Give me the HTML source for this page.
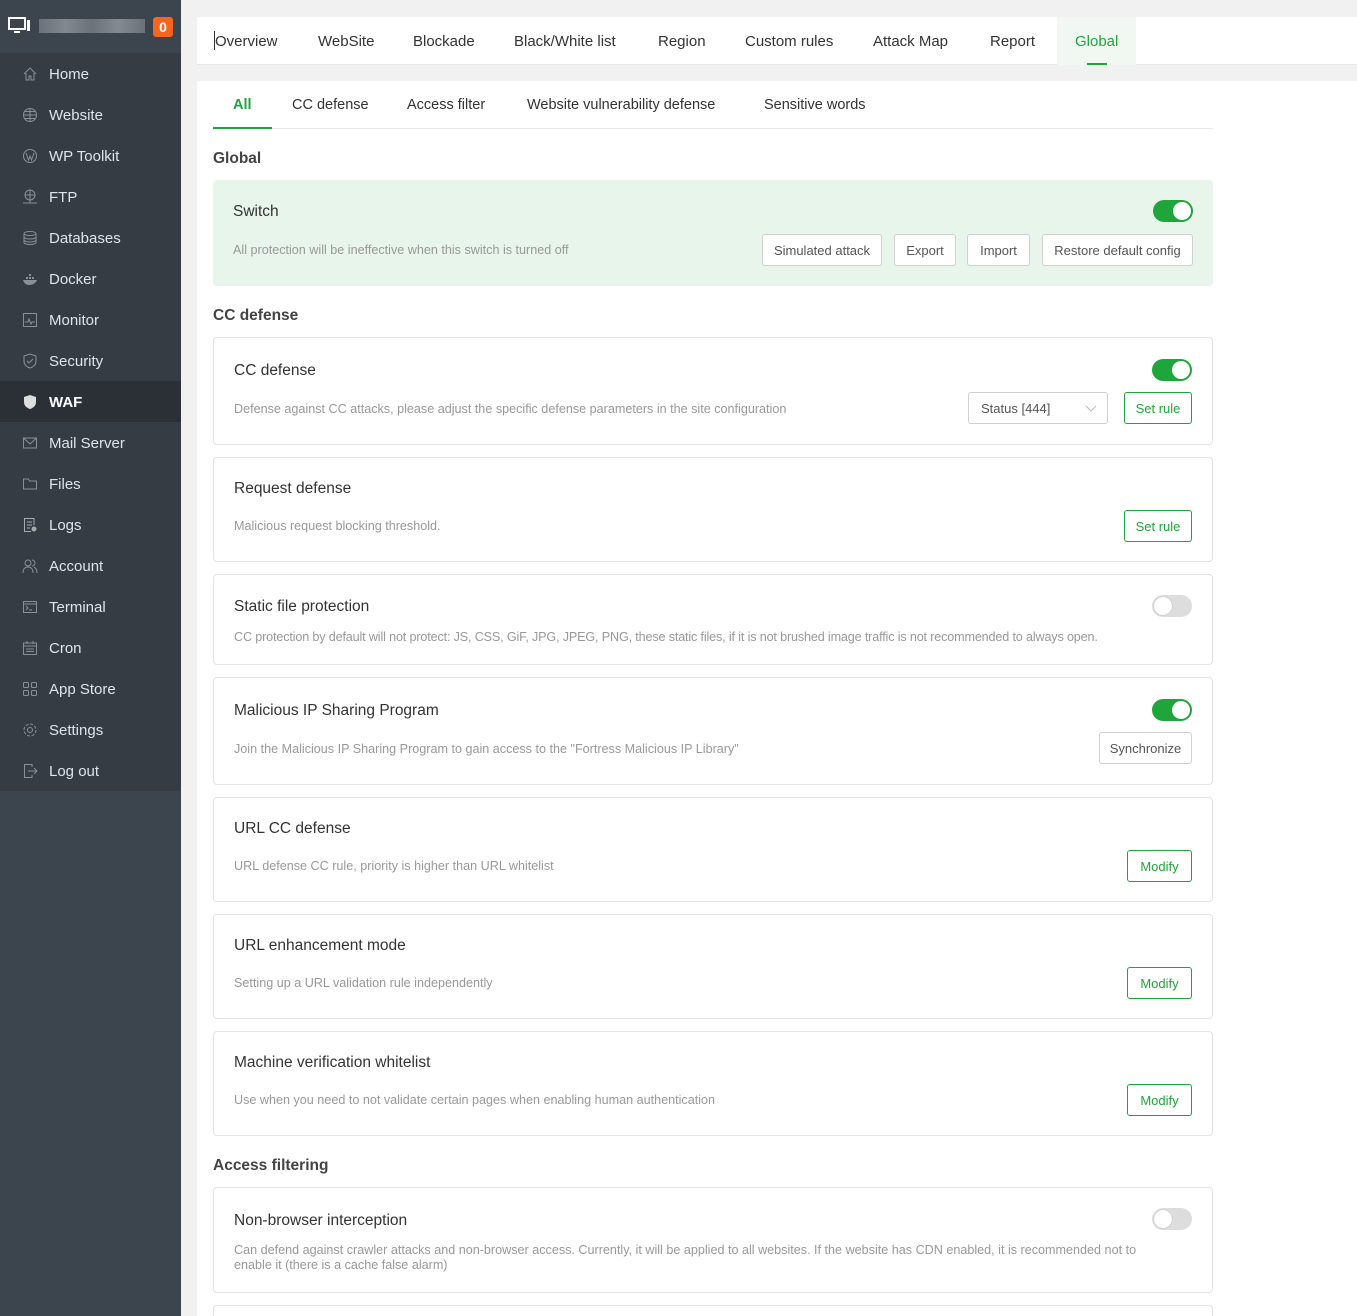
<!DOCTYPE html>
<html style="overflow:hidden;height:1316px"><head><meta charset="utf-8"><style>
*{margin:0;padding:0;box-sizing:border-box}
body{width:1357px;height:1316px;background:#f1f1f1;font-family:"Liberation Sans",sans-serif;position:relative;overflow:hidden}
.sb{position:absolute;left:0;top:0;width:181px;height:1316px;background:#3c444d}
.sbh{position:absolute;left:0;top:0;width:181px;height:53px;background:#3c444d}
.menu{position:absolute;left:0;top:53px;width:181px;height:738px;background:#353c44}
.mi{height:41px;display:flex;align-items:center;padding-left:22px;color:#dfe4ea;font-size:15px;padding-top:1px}
.mi svg{width:16px;height:16px;margin-right:11px;flex:none}
.mi.act{background:#2b3036;color:#fff;font-weight:bold}
.a{position:absolute}
.top{position:absolute;left:197px;top:17px;width:1160px;height:48px;background:#fff;border-bottom:1px solid #e6e6e6}
.top span{position:absolute;top:16px;font-size:15px;color:#333}
.main{position:absolute;left:197px;top:81px;width:1160px;height:1235px;background:#fff;overflow:hidden}
.tab{position:absolute;top:16px;font-size:14.5px;color:#333}
.sec{position:absolute;left:16px;font-size:15.5px;font-weight:bold;color:#444}
.card{position:absolute;left:16px;width:1000px;border:1px solid #e4e4e4;border-radius:4px;background:#fff}
.t{position:absolute;left:20px;font-size:15.5px;color:#333}
.d{position:absolute;left:20px;font-size:12.6px;color:#999}
.btn{position:absolute;height:32px;border:1px solid #d0d0d0;border-radius:3px;font-size:13px;color:#555;display:flex;align-items:center;justify-content:center;background:#fff}
.gb{border-color:#20a53a;color:#20a53a}
.sw{position:absolute;right:20px;width:40px;height:22px;border-radius:11px;background:#20a53a}
.sw::after{content:"";position:absolute;top:2px;right:2px;width:18px;height:18px;border-radius:50%;background:#fff}
.sw.off{background:#ddd}
.sw.off::after{right:auto;left:2px;box-shadow:0 0 1px #999}
</style></head><body>
<div class="sb"></div>
<div class="sbh">
<svg class="a" style="left:8px;top:17px" width="24" height="18" viewBox="0 0 24 18"><rect x="1" y="1" width="16" height="11" fill="none" stroke="#fff" stroke-width="2"/><rect x="6" y="14" width="6" height="2" fill="#fff"/><rect x="19" y="3" width="3" height="11" fill="#fff"/></svg>
<div class="a" style="left:39px;top:19px;width:106px;height:14px;background:linear-gradient(90deg,#6f767e,#8a9097,#70777f,#8c9299,#6f767e);opacity:.9"></div>
<div class="a" style="left:153px;top:17px;width:20px;height:20px;background:#f7641f;border-radius:3px;color:#fff;font-weight:bold;font-size:14px;text-align:center;line-height:20px">0</div>
</div>
<div class="menu">
<div class="mi"><svg viewBox="0 0 16 16" fill="none" stroke="#8a9097"><path d="M2 8L8 2l6 6M4 7v7h3v-4h2v4h3V7"/></svg>Home</div>
<div class="mi"><svg viewBox="0 0 16 16" fill="none" stroke="#8a9097"><circle cx="8" cy="8" r="6.5"/><path d="M1.5 8h13M8 1.5v13M3 4.5h10M3 11.5h10"/></svg>Website</div>
<div class="mi"><svg viewBox="0 0 16 16" fill="none" stroke="#8a9097"><circle cx="8" cy="8" r="6.5"/><path d="M4 5l2.5 7L8 8l1.5 4L12 5"/></svg>WP Toolkit</div>
<div class="mi"><svg viewBox="0 0 16 16" fill="none" stroke="#8a9097"><circle cx="8" cy="6" r="5"/><path d="M3 6h10M8 1v10M1 14h14M8 11v3"/></svg>FTP</div>
<div class="mi"><svg viewBox="0 0 16 16" fill="none" stroke="#8a9097"><ellipse cx="8" cy="3.5" rx="6" ry="2"/><path d="M2 3.5v9c0 1 2.7 2 6 2s6-1 6-2v-9M2 7c0 1 2.7 2 6 2s6-1 6-2M2 10c0 1 2.7 2 6 2s6-1 6-2"/></svg>Databases</div>
<div class="mi"><svg viewBox="0 0 16 16" fill="#8a9097"><path d="M1 9h14c-1 3-4 5-8 5-3 0-5-2-6-5zM4 6h2v2H4zM7 6h2v2H7zM7 3h2v2H7zM10 6h2v2h-2z"/></svg>Docker</div>
<div class="mi"><svg viewBox="0 0 16 16" fill="none" stroke="#8a9097"><rect x="1.5" y="1.5" width="13" height="13"/><path d="M3 10h3l1-3 2 5 1-2h3"/></svg>Monitor</div>
<div class="mi"><svg viewBox="0 0 16 16" fill="none" stroke="#8a9097"><path d="M8 1l6 2v5c0 4-3 6-6 7-3-1-6-3-6-7V3z"/><path d="M5 8l2 2 4-4"/></svg>Security</div>
<div class="mi act"><svg viewBox="0 0 16 16" fill="#ddd"><path d="M8 1l6 2v5c0 4-3 6-6 7-3-1-6-3-6-7V3z"/></svg>WAF</div>
<div class="mi"><svg viewBox="0 0 16 16" fill="none" stroke="#8a9097"><rect x="1.5" y="3" width="13" height="10"/><path d="M1.5 3L8 9l6.5-6"/></svg>Mail Server</div>
<div class="mi"><svg viewBox="0 0 16 16" fill="none" stroke="#8a9097"><path d="M1.5 3h5l1 2h7v8h-13z"/></svg>Files</div>
<div class="mi"><svg viewBox="0 0 16 16" fill="none" stroke="#aaa"><path d="M12 8V1.5H2.5v13H9M5 5h5M5 8h5M5 11h3"/><circle cx="12" cy="12" r="2" fill="#aaa"/></svg>Logs</div>
<div class="mi"><svg viewBox="0 0 16 16" fill="none" stroke="#8a9097"><circle cx="6" cy="5" r="3"/><path d="M1 15c0-4 2-6 5-6s5 2 5 6M10 2a3 3 0 010 6M12 9c2 1 3 3 3 6"/></svg>Account</div>
<div class="mi"><svg viewBox="0 0 16 16" fill="none" stroke="#8a9097"><rect x="1.5" y="2.5" width="13" height="11"/><path d="M1.5 5h13M4 7l2 2-2 2M7 11h3"/></svg>Terminal</div>
<div class="mi"><svg viewBox="0 0 16 16" fill="none" stroke="#8a9097"><rect x="1.5" y="3" width="13" height="11.5"/><path d="M1.5 6h13M5 1v3M11 1v3M4 9h8M4 11.5h8"/></svg>Cron</div>
<div class="mi"><svg viewBox="0 0 16 16" fill="none" stroke="#8a9097"><rect x="1.5" y="1.5" width="5" height="5" rx="1"/><rect x="9.5" y="1.5" width="5" height="5" rx="1"/><rect x="1.5" y="9.5" width="5" height="5" rx="1"/><rect x="9.5" y="9.5" width="5" height="5" rx="1"/></svg>App Store</div>
<div class="mi"><svg viewBox="0 0 16 16" fill="none" stroke="#8a9097"><circle cx="8" cy="8" r="2.5"/><circle cx="8" cy="8" r="6" stroke-dasharray="3 1.7"/></svg>Settings</div>
<div class="mi"><svg viewBox="0 0 16 16" fill="none" stroke="#8a9097"><path d="M10 4V1.5H2.5v13H10V12M6 8h9M12 5l3 3-3 3"/></svg>Log out</div>
</div>

<div class="top">
<div class="a" style="left:17px;top:14px;width:1px;height:19px;background:#333"></div>
<span style="left:18px">Overview</span>
<span style="left:121px">WebSite</span>
<span style="left:216px">Blockade</span>
<span style="left:317px">Black/White list</span>
<span style="left:461px">Region</span>
<span style="left:548px">Custom rules</span>
<span style="left:676px">Attack Map</span>
<span style="left:793px">Report</span>
<div class="a" style="left:860px;top:0;width:79px;height:48px;background:#f0f8f1"></div>
<span style="left:878px;color:#20a53a">Global</span>
<div class="a" style="left:890px;top:46px;width:20px;height:2px;background:#20a53a"></div>
</div>

<div class="main">
<div class="a" style="left:16px;top:47px;width:1000px;height:1px;background:#e8e8e8"></div>
<div class="tab" style="left:36px;color:#20a53a;font-weight:bold">All</div>
<div class="a" style="left:16px;top:46px;width:59px;height:2px;background:#20a53a"></div>
<div class="tab" style="left:95px">CC defense</div>
<div class="tab" style="left:210px">Access filter</div>
<div class="tab" style="left:330px">Website vulnerability defense</div>
<div class="tab" style="left:567px">Sensitive words</div>

<div class="sec" style="top:69px">Global</div>
<div class="a" style="left:16px;top:99px;width:1000px;height:106px;background:#e8f5ea;border-radius:4px">
<div class="t" style="top:23px">Switch</div>
<div class="d" style="top:63px">All protection will be ineffective when this switch is turned off</div>
<div class="sw" style="top:20px"></div>
<div class="btn" style="left:549px;top:54px;width:120px">Simulated attack</div>
<div class="btn" style="left:681px;top:54px;width:62px">Export</div>
<div class="btn" style="left:754px;top:54px;width:63px">Import</div>
<div class="btn" style="left:829px;top:54px;width:151px">Restore default config</div>
</div>

<div class="sec" style="top:226px">CC defense</div>
<div class="card" style="top:256px;height:108px">
<div class="t" style="top:24px">CC defense</div>
<div class="d" style="top:64px">Defense against CC attacks, please adjust the specific defense parameters in the site configuration</div>
<div class="sw" style="top:21px"></div>
<div class="btn" style="left:754px;top:54px;width:140px;justify-content:flex-start;padding-left:12px">Status [444]<svg class="a" style="right:10px;top:12px" width="12" height="8" viewBox="0 0 12 8"><path d="M1 1l5 5 5-5" fill="none" stroke="#bbb"/></svg></div>
<div class="btn gb" style="left:910px;top:54px;width:68px">Set rule</div>
</div>

<div class="card" style="top:376px;height:105px">
<div class="t" style="top:22px">Request defense</div>
<div class="d" style="top:61px">Malicious request blocking threshold.</div>
<div class="btn gb" style="left:910px;top:52px;width:68px">Set rule</div>
</div>

<div class="card" style="top:493px;height:91px">
<div class="t" style="top:23px">Static file protection</div>
<div class="d" style="top:55px;letter-spacing:-.15px">CC protection by default will not protect: JS, CSS, GiF, JPG, JPEG, PNG, these static files, if it is not brushed image traffic is not recommended to always open.</div>
<div class="sw off" style="top:20px"></div>
</div>

<div class="card" style="top:596px;height:108px">
<div class="t" style="top:24px">Malicious IP Sharing Program</div>
<div class="d" style="top:64px">Join the Malicious IP Sharing Program to gain access to the "Fortress Malicious IP Library"</div>
<div class="sw" style="top:21px"></div>
<div class="btn" style="left:885px;top:54px;width:93px">Synchronize</div>
</div>

<div class="card" style="top:716px;height:105px">
<div class="t" style="top:22px">URL CC defense</div>
<div class="d" style="top:61px">URL defense CC rule, priority is higher than URL whitelist</div>
<div class="btn gb" style="left:913px;top:52px;width:65px">Modify</div>
</div>

<div class="card" style="top:833px;height:105px">
<div class="t" style="top:22px">URL enhancement mode</div>
<div class="d" style="top:61px">Setting up a URL validation rule independently</div>
<div class="btn gb" style="left:913px;top:52px;width:65px">Modify</div>
</div>

<div class="card" style="top:950px;height:105px">
<div class="t" style="top:22px">Machine verification whitelist</div>
<div class="d" style="top:61px">Use when you need to not validate certain pages when enabling human authentication</div>
<div class="btn gb" style="left:913px;top:52px;width:65px">Modify</div>
</div>

<div class="sec" style="top:1076px">Access filtering</div>
<div class="card" style="top:1106px;height:106px">
<div class="t" style="top:24px">Non-browser interception</div>
<div class="d" style="top:55px;width:940px;line-height:15px">Can defend against crawler attacks and non-browser access. Currently, it will be applied to all websites. If the website has CDN enabled, it is recommended not to enable it (there is a cache false alarm)</div>
<div class="sw off" style="top:20px"></div>
</div>
<div class="card" style="top:1224px;height:40px"></div>
</div>
</body></html>
